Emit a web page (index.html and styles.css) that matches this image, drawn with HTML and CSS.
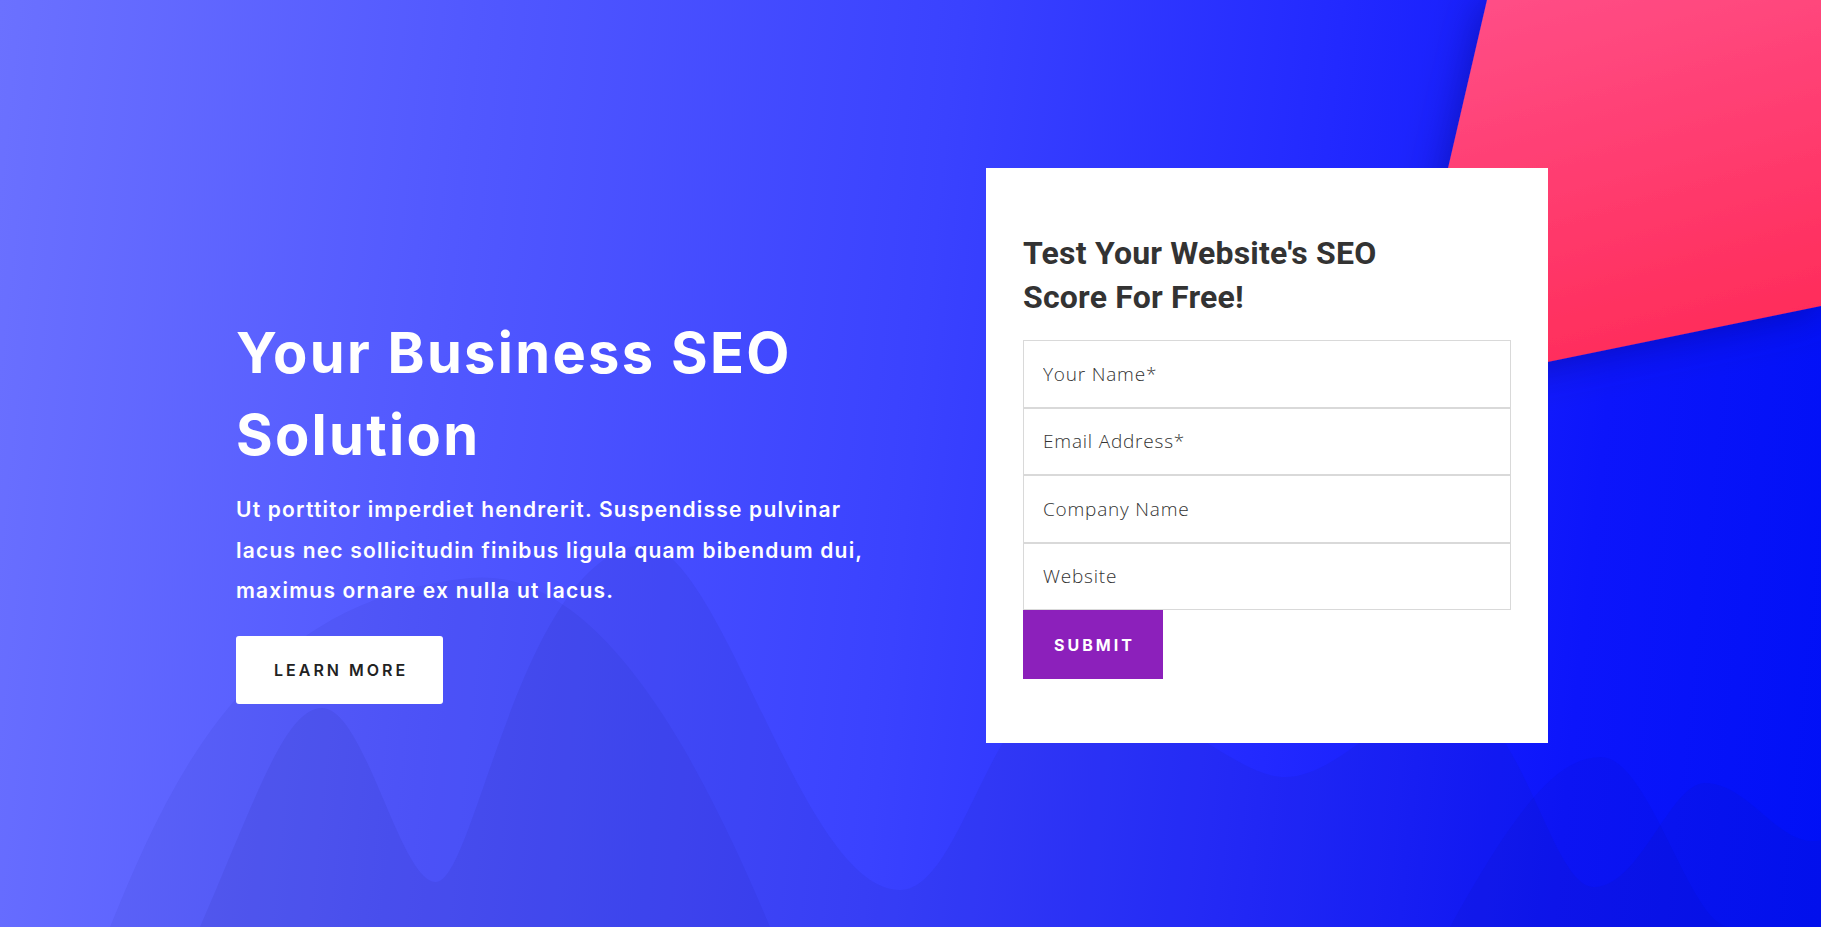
FILE: index.html
```html
<!DOCTYPE html>
<html lang="en">
<head>
<meta charset="utf-8">
<title>Your Business SEO Solution</title>
<link rel="stylesheet" href="styles.css">
</head>
<body>
<section class="hero">
  <svg class="hero-bg" viewBox="0 0 1821 927" preserveAspectRatio="none" aria-hidden="true">
    <defs>
      <linearGradient id="pink" x1="0" y1="0" x2="0.3" y2="1">
        <stop offset="0" stop-color="#ff5089"/>
        <stop offset="1" stop-color="#ff2c5a"/>
      </linearGradient>
      <filter id="shadow" x="-20%" y="-20%" width="140%" height="140%">
        <feDropShadow dx="0" dy="0" stdDeviation="22" flood-color="#000060" flood-opacity="0.45"/>
      </filter>
    </defs>
    <path class="wave-a" d="M110,927 C170,780 250,600 470,578 C600,566 700,760 770,927 Z"/>
    <path class="wave-b" d="M200,927 C255,800 285,708 322,708 C365,708 400,882 436,882 C475,882 520,560 640,545 C720,535 800,890 900,890 C960,890 990,700 1060,690 C1150,680 1230,777 1285,777 C1340,777 1390,700 1450,700 C1520,700 1550,887 1594,887 C1640,887 1670,783 1705,783 C1750,783 1780,850 1821,840 L1821,927 Z"/>
    <path class="wave-a" d="M1450,927 C1520,800 1560,757 1601,757 C1650,757 1690,927 1730,927 Z"/>
    <polygon points="1487,0 1821,0 1821,306 1396,393" fill="url(#pink)" filter="url(#shadow)"/>
  </svg>

  <div class="hero-row">
    <div class="intro">
      <h1 class="intro-title">Your Business SEO Solution</h1>
      <p class="intro-text">Ut porttitor imperdiet hendrerit. Suspendisse pulvinar lacus nec sollicitudin finibus ligula quam bibendum dui, maximus ornare ex nulla ut lacus.</p>
      <a class="btn-learn" href="#">Learn More</a>
    </div>

    <div class="card">
      <h2 class="card-title">Test Your Website's SEO Score For Free!</h2>
      <form class="seo-form">
        <input class="field" type="text" placeholder="Your Name*">
        <input class="field" type="email" placeholder="Email Address*">
        <input class="field" type="text" placeholder="Company Name">
        <input class="field" type="text" placeholder="Website">
        <button class="btn-submit" type="button">Submit</button>
      </form>
    </div>
  </div>
</section>
</body>
</html>
```

FILE: styles.css
```css
html, body {
  margin: 0;
  padding: 0;
}

body {
  font-family: Inter, "Liberation Sans", sans-serif;
  overflow: hidden;
}

.hero {
  position: relative;
  height: 927px;
  overflow: hidden;
  background: linear-gradient(96deg, #6b71ff 0%, #5158ff 25%, #3a42ff 50%, #2229ff 70%, #0c15fb 86%, #0010f6 100%);
}

.hero-bg {
  position: absolute;
  inset: 0;
  width: 100%;
  height: 100%;
}

.wave-a {
  fill: #14157a;
  opacity: 0.06;
}

.wave-b {
  fill: #14157a;
  opacity: 0.08;
}

.hero-row {
  position: relative;
  display: flex;
  align-items: flex-start;
  gap: 100px;
  padding: 168px 0 0 236px;
}

.intro {
  width: 650px;
  margin-top: 144px;
  color: #fff;
}

.intro-title {
  margin: 0;
  font-size: 56px;
  line-height: 82px;
  font-weight: 700;
  letter-spacing: 2.3px;
}

.intro-text {
  margin: 14px 0 0;
  font-size: 21px;
  line-height: 40.5px;
  font-weight: 600;
  letter-spacing: 1.2px;
}

.btn-learn {
  display: inline-flex;
  align-items: center;
  box-sizing: border-box;
  width: 207px;
  height: 68px;
  margin-top: 24px;
  padding-left: 38px;
  background: #fff;
  border-radius: 3px;
  color: #222;
  font-size: 16px;
  font-weight: 600;
  letter-spacing: 3px;
  text-transform: uppercase;
  text-decoration: none;
}

.card {
  box-sizing: border-box;
  width: 562px;
  padding: 63px 37px 64px;
  background: #fff;
}

.card-title {
  max-width: 400px;
  margin: 0 0 21px;
  font-family: Roboto, "Liberation Sans", sans-serif;
  font-size: 32px;
  line-height: 44px;
  font-weight: 700;
  letter-spacing: 0.2px;
  color: #333;
}

.seo-form {
  margin: 0;
}

.field {
  display: block;
  box-sizing: border-box;
  width: 100%;
  height: 67.5px;
  margin: 0;
  padding: 0 19px;
  border: 1px solid #d9d9d9;
  border-radius: 0;
  background: #fff;
  font-family: "Open Sans", Inter, sans-serif;
  font-size: 19px;
  font-weight: 300;
  letter-spacing: 0.8px;
  color: #444;
  outline: none;
}

.field::placeholder {
  color: #333;
  opacity: 1;
}

.btn-submit {
  display: block;
  width: 140px;
  height: 69px;
  margin: 0;
  padding: 0 0 0 3px;
  border: 0;
  border-radius: 0;
  background: #8c20bb;
  color: #fff;
  font-family: Inter, sans-serif;
  font-size: 16px;
  font-weight: 700;
  letter-spacing: 3px;
  text-transform: uppercase;
  cursor: pointer;
}
```
